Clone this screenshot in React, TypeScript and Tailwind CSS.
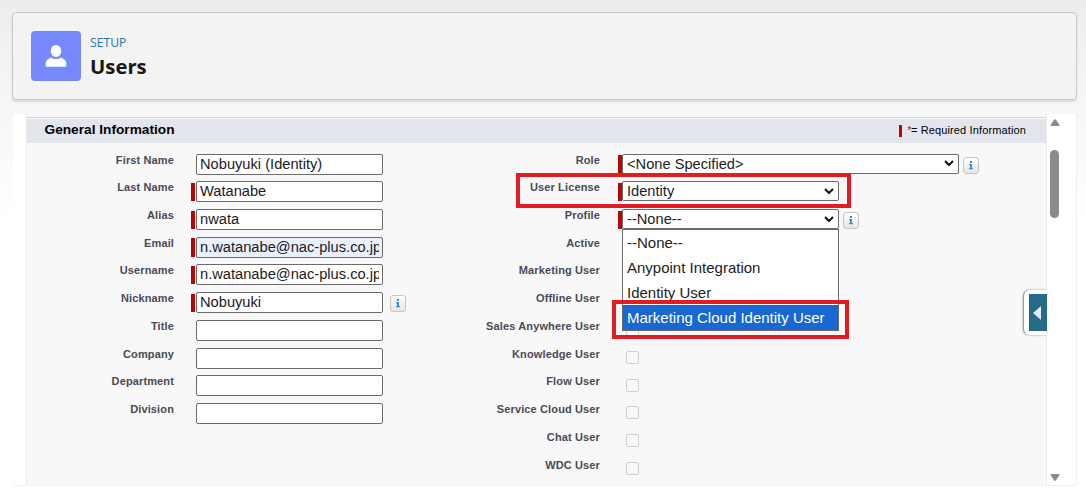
import React from "react"

interface TextField {
  label: string
  value?: string
  required?: boolean
  autofilled?: boolean
  info?: boolean
}

const textFields: TextField[] = [
  { label: "First Name", value: "Nobuyuki (Identity)" },
  { label: "Last Name", value: "Watanabe", required: true },
  { label: "Alias", value: "nwata", required: true },
  { label: "Email", value: "n.watanabe@nac-plus.co.jp", required: true, autofilled: true },
  { label: "Username", value: "n.watanabe@nac-plus.co.jp", required: true },
  { label: "Nickname", value: "Nobuyuki", required: true, info: true },
  { label: "Title" },
  { label: "Company" },
  { label: "Department" },
  { label: "Division" },
]

const checkboxes = [
  "Active",
  "Marketing User",
  "Offline User",
  "Sales Anywhere User",
  "Knowledge User",
  "Flow User",
  "Service Cloud User",
  "Chat User",
  "WDC User",
]

const profiles = ["--None--", "Anypoint Integration", "Identity User", "Marketing Cloud Identity User"]

function InfoIcon() {
  return (
    <span className="mt-[7px] ml-1 flex h-[17px] w-4 shrink-0 items-center justify-center rounded-[3px] border border-[#c3c6c9] bg-linear-to-b from-white to-[#e4e6e8]">
      <svg width="6" height="9" viewBox="0 0 6 9" fill="#3b8ede">
        <path d="M2 0h2v2H2zM1 3h3v4h1v1.2H1V7h1V4.2H1z" />
      </svg>
    </span>
  )
}

function Row({ label, children }: { label: string; children?: React.ReactNode }) {
  return (
    <div className="flex h-[27.72px] items-start">
      <div className="w-[147px] shrink-0 text-right text-[11px] leading-[21px] font-bold tracking-[0.13px] whitespace-nowrap text-[#4a4a56]">
        {label}
      </div>
      {children}
    </div>
  )
}

function RequiredBar({ show }: { show?: boolean }) {
  return <span className={show ? "mt-[5.5px] h-[18.5px] w-1 shrink-0 bg-[#ba0505]" : "w-1 shrink-0"} />
}

function Select({ value, wide, children }: { value: string; wide?: boolean; children?: React.ReactNode }) {
  return (
    <div
      className={`relative mt-1 flex h-5 shrink-0 items-center justify-between rounded-[2px] border border-[#6b6b6b] bg-white pr-[4px] pl-[4px] text-[14.67px] text-[#1c1c1c] ${
        wide ? "w-[337px]" : "w-[217px]"
      }`}
    >
      <span className="leading-[18px]">{value}</span>
      <svg width="10" height="7" viewBox="0 0 10 7" fill="none" stroke="#111" strokeWidth="2">
        <path d="M1 1l4 4 4-4" />
      </svg>
      {children}
    </div>
  )
}

export default function App() {
  return (
    <div className="h-[494px] w-[1086px] overflow-hidden bg-linear-to-b from-[#ededed] via-[#f6f6f6] via-20% to-white to-45% px-3 pt-3 font-['Liberation_Sans',Arial,sans-serif]">
      {/* page header */}
      <header className="flex h-[88px] w-[1065px] items-center rounded-[4px] border border-[#c9c9c9] bg-[#f3f3f3] pl-[18px] shadow-[0_2px_2px_rgba(0,0,0,0.1)]">
        <div className="flex h-[50px] w-[50px] items-center justify-center rounded-[4px] bg-[#7589fc]">
          <svg width="22" height="22" viewBox="0 0 22 22" fill="white">
            <ellipse cx="11" cy="6" rx="5.3" ry="6" />
            <path d="M.5 19.5c0-4 2.7-6.1 5.8-7.1 1.3 1 2.9 1.6 4.7 1.6s3.4-.6 4.7-1.6c3.1 1 5.8 3.1 5.8 7.1 0 1.5-.8 2.3-2.2 2.3H2.7C1.3 21.8.5 21 .5 19.5z" />
          </svg>
        </div>
        <div className="mt-px ml-[9px] font-['Open_Sans','Noto_Sans',sans-serif]">
          <div className="text-[12.2px] leading-[18px] text-[#2574a9]">SETUP</div>
          <h1 className="text-[20.3px] leading-[28px] font-bold text-[#181818]">Users</h1>
        </div>
      </header>

      {/* scrolling form */}
      <main className="mt-[14px] ml-[1px] flex h-[372px] w-[1064px] rounded-b-[4px] border-r border-b border-[#efefef] bg-white">
        <div className="ml-[13px] h-[371px] w-[1021px] overflow-hidden border-x border-[#ebebeb] bg-[#f8f8f8] pt-[3px]">
          <div className="h-px bg-[#d4d4d6]" />
          <div className="mt-px flex h-6 items-center justify-between bg-[#e3e5ed] pr-[20px] pb-px pl-[17.5px]">
            <h2 className="text-[13.7px] font-bold text-black">General Information</h2>
            <div className="flex items-center text-[11px] tracking-[0.13px] text-black">
              <span className="mr-[5px] h-3 w-[3px] bg-[#ba0505]" />
              <span className="-mr-[0.5px] text-[10px] text-[#c00]">*</span>= Required Information
            </div>
          </div>

          <div className="flex pt-[6.6px]">
            <div className="w-[426px]">
              {textFields.map((field) => (
                <Row key={field.label} label={field.label}>
                  <span className="w-[17px] shrink-0" />
                  <RequiredBar show={field.required} />
                  <div
                    className={`mt-1 ml-px h-[21px] w-[187px] shrink-0 rounded-[2px] border border-[#6b6b6b] px-[3px] text-[14.67px] leading-[19px] text-[#1c1c1c] ${
                      field.autofilled ? "bg-[#e8f0fe]" : "bg-white"
                    }`}
                  >
                    <div className="overflow-hidden whitespace-nowrap">{field.value}</div>
                  </div>
                  {field.info && <span className="ml-[3px]"><InfoIcon /></span>}
                </Row>
              ))}
            </div>

            <div className="w-[593px]">
              <Row label="Role">
                <span className="w-[18px] shrink-0" />
                <RequiredBar show />
                <Select value="<None Specified>" wide />
                <InfoIcon />
              </Row>
              <Row label="User License">
                <span className="w-[18px] shrink-0" />
                <RequiredBar show />
                <Select value="Identity">
                  <span className="absolute -top-[9px] -left-[107px] h-[35px] w-[335px] border-4 border-[#e31b23]" />
                </Select>
              </Row>
              <Row label="Profile">
                <span className="w-[18px] shrink-0" />
                <RequiredBar show />
                <Select value="--None--">
                  {/* open option list */}
                  <ul className="absolute top-[19px] -left-px z-10 w-[217px] border border-[#6b6b6b] bg-white">
                    {profiles.map((profile) => (
                      <li
                        key={profile}
                        className="h-[25px] pl-[4px] text-[15px] leading-[25px] whitespace-nowrap text-[#1c1c1c] last:bg-[#1967d2] last:text-white"
                      >
                        {profile}
                      </li>
                    ))}
                  </ul>
                  <span className="absolute top-[90px] -left-[11px] z-20 h-[39px] w-[237px] border-4 border-[#e31b23]" />
                </Select>
                <InfoIcon />
              </Row>
              {checkboxes.map((label) => (
                <Row key={label} label={label}>
                  <span className="mt-[7.4px] ml-[26.4px] h-[13px] w-[13px] rounded-[2px] border border-[#cfcfcf] bg-[#f8f8f8]" />
                </Row>
              ))}
            </div>
          </div>
        </div>

        {/* scrollbar */}
        <div className="relative flex h-full w-[15px] flex-col items-center justify-between pt-[5px] pb-[4px]">
          <svg width="10" height="7" viewBox="0 0 10 7" fill="#8b8b8b">
            <path d="M4.2.5Q5-.2 5.8.5L9.3 5.5Q9.5 7 8.5 7H1.5Q.5 7 .7 5.5z" />
          </svg>
          <div className="mt-[24px] mb-auto h-[68px] w-[9px] rounded-full bg-[#8b8b8b]" />
          <svg width="10" height="7" viewBox="0 0 10 7" fill="#8b8b8b">
            <path d="M4.2 6.5Q5 7.2 5.8 6.5L9.3 1.5Q9.5 0 8.5 0H1.5Q.5 0 .7 1.5z" />
          </svg>
          {/* sidebar toggle, sits over the edge of the form */}
          <div className="absolute top-[176px] right-[15px] flex h-[45px] w-[23px] items-center rounded-l-[6px] bg-white pl-[5px] shadow-[-1px_0_2px_rgba(0,0,0,0.5)]">
            <div className="flex h-[37px] w-[18px] items-center bg-[#236b87] pl-[4px]">
              <svg width="8" height="14" viewBox="0 0 8 14">
                <path d="M8 0v14L0 7z" fill="#e3e8ea" />
              </svg>
            </div>
          </div>
        </div>
      </main>
    </div>
  )
}
